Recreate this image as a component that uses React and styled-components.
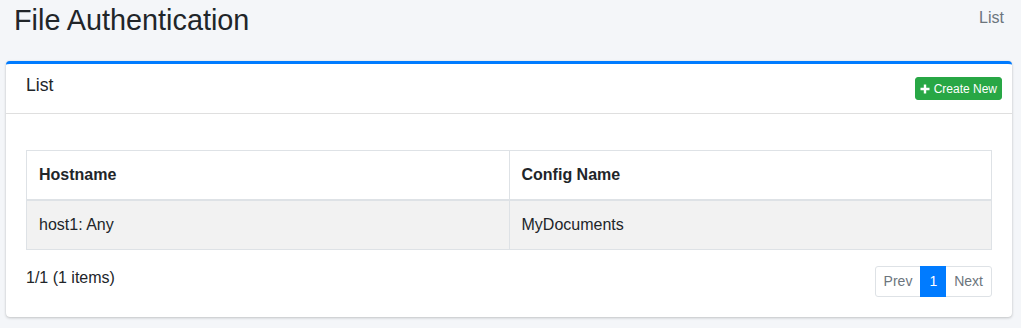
import React from 'react'
import styled, { createGlobalStyle } from 'styled-components'

const GlobalStyle = createGlobalStyle`
  html, body {
    margin: 0;
    padding: 0;
    background: #f4f6f9;
    font-family: "Liberation Sans", Arial, sans-serif;
    color: #212529;
  }
  * {
    box-sizing: border-box;
  }
`

const Page = styled.div`
  width: 1021px;
  height: 328px;
  background: #f4f6f9;
  overflow: hidden;
`

const ContentHeader = styled.div`
  display: flex;
  justify-content: space-between;
  align-items: flex-start;
  height: 61px;
  padding: 3px 17px 0 14px;
`

const Title = styled.h1`
  margin: 0;
  font-size: 28.8px;
  font-weight: 400;
  line-height: 1.2;
  color: #212529;
`

const Breadcrumb = styled.span`
  margin-top: 3px;
  font-size: 16px;
  line-height: 24px;
  color: #6c757d;
`

const Card = styled.div`
  margin: 0 9px 0 6px;
  background: #fff;
  border-top: 3px solid #007bff;
  border-radius: 4px;
  box-shadow: 0 0 1px rgba(0, 0, 0, 0.125), 0 1px 3px rgba(0, 0, 0, 0.2);
`

const CardHeader = styled.div`
  display: flex;
  justify-content: space-between;
  align-items: flex-start;
  height: 50px;
  padding: 10px 10px 0 20px;
  border-bottom: 1px solid rgba(0, 0, 0, 0.125);
`

const CardTitle = styled.h3`
  margin: 1px 0 0;
  font-size: 17.6px;
  font-weight: 400;
  line-height: 1.2;
`

const CreateButton = styled.button`
  display: flex;
  align-items: center;
  gap: 4px;
  margin-top: 3px;
  height: 23px;
  padding: 0 4px;
  border: 1px solid #28a745;
  border-radius: 3px;
  background: #28a745;
  color: #fff;
  font-family: inherit;
  font-size: 12px;
  line-height: 1;
  cursor: pointer;
`

const CardBody = styled.div`
  padding: 36px 20px 20px 20px;
`

const Table = styled.table`
  width: 100%;
  border-collapse: collapse;
  border: 1px solid #dee2e6;
  font-size: 16px;
`

const Th = styled.th`
  text-align: left;
  font-weight: 700;
  padding: 12px;
  line-height: 24px;
  border: 1px solid #dee2e6;
  border-bottom: 2px solid #dee2e6;
  width: 50%;
`

const Td = styled.td`
  padding: 12px;
  line-height: 24px;
  border: 1px solid #dee2e6;
`

const StripedRow = styled.tr`
  background: #f2f2f2;
`

const Footer = styled.div`
  display: flex;
  justify-content: space-between;
  align-items: flex-start;
  margin-top: 16px;
`

const Summary = styled.span`
  font-size: 16px;
  line-height: 24px;
`

const Pagination = styled.ul`
  display: flex;
  margin: 0;
  padding: 0;
  list-style: none;
`

const PageLink = styled.li`
  margin-left: ${p => (p.$first ? '0' : '-1px')};
  padding: 4px 8px;
  font-size: 14px;
  line-height: 21px;
  border: 1px solid ${p => (p.$active ? '#007bff' : '#dee2e6')};
  background: ${p => (p.$active ? '#007bff' : '#fff')};
  color: ${p => (p.$active ? '#fff' : '#6c757d')};
  border-radius: ${p => (p.$first ? '3px 0 0 3px' : p.$last ? '0 3px 3px 0' : '0')};
  position: relative;
  z-index: ${p => (p.$active ? 1 : 0)};
`

const PlusIcon = () => (
  <svg width="10" height="10" viewBox="0 0 10 10">
    <path d="M5 0.5v9M0.5 5h9" stroke="#fff" strokeWidth="2.4" />
  </svg>
)

const rows = [{ host: 'host1: Any', config: 'MyDocuments' }]

export default function App() {
  return (
    <Page>
      <GlobalStyle />
      <ContentHeader>
        <Title>File Authentication</Title>
        <Breadcrumb>List</Breadcrumb>
      </ContentHeader>
      <Card>
        <CardHeader>
          <CardTitle>List</CardTitle>
          <CreateButton>
            <PlusIcon />
            Create New
          </CreateButton>
        </CardHeader>
        <CardBody>
          <Table>
            <thead>
              <tr>
                <Th>Hostname</Th>
                <Th>Config Name</Th>
              </tr>
            </thead>
            <tbody>
              {rows.map((r, i) => (
                <StripedRow key={i}>
                  <Td>{r.host}</Td>
                  <Td>{r.config}</Td>
                </StripedRow>
              ))}
            </tbody>
          </Table>
          <Footer>
            <Summary>1/1 (1 items)</Summary>
            <Pagination>
              <PageLink $first>Prev</PageLink>
              <PageLink $active>1</PageLink>
              <PageLink $last>Next</PageLink>
            </Pagination>
          </Footer>
        </CardBody>
      </Card>
    </Page>
  )
}
